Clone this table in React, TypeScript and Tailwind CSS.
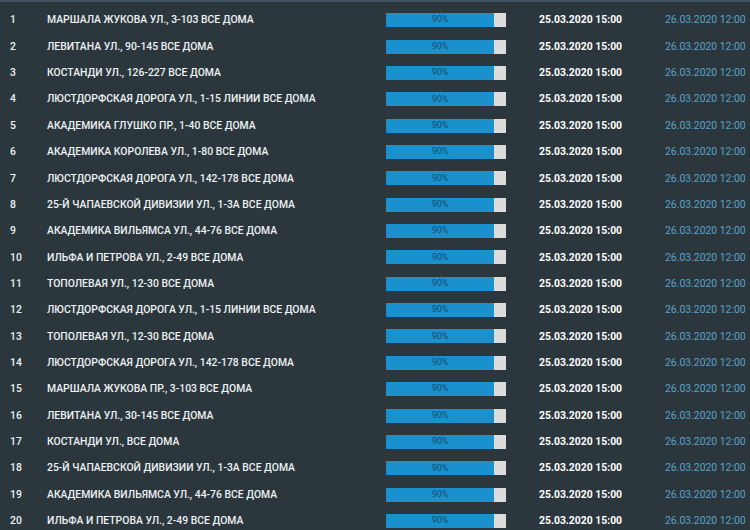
const rows = [
  "МАРШАЛА ЖУКОВА УЛ., 3-103 ВСЕ ДОМА",
  "ЛЕВИТАНА УЛ., 90-145 ВСЕ ДОМА",
  "КОСТАНДИ УЛ., 126-227 ВСЕ ДОМА",
  "ЛЮСТДОРФСКАЯ ДОРОГА УЛ., 1-15 ЛИНИИ ВСЕ ДОМА",
  "АКАДЕМИКА ГЛУШКО ПР., 1-40 ВСЕ ДОМА",
  "АКАДЕМИКА КОРОЛЕВА УЛ., 1-80 ВСЕ ДОМА",
  "ЛЮСТДОРФСКАЯ ДОРОГА УЛ., 142-178 ВСЕ ДОМА",
  "25-Й ЧАПАЕВСКОЙ ДИВИЗИИ УЛ., 1-3А ВСЕ ДОМА",
  "АКАДЕМИКА ВИЛЬЯМСА УЛ., 44-76 ВСЕ ДОМА",
  "ИЛЬФА И ПЕТРОВА УЛ., 2-49 ВСЕ ДОМА",
  "ТОПОЛЕВАЯ УЛ., 12-30 ВСЕ ДОМА",
  "ЛЮСТДОРФСКАЯ ДОРОГА УЛ., 1-15 ЛИНИИ ВСЕ ДОМА",
  "ТОПОЛЕВАЯ УЛ., 12-30 ВСЕ ДОМА",
  "ЛЮСТДОРФСКАЯ ДОРОГА УЛ., 142-178 ВСЕ ДОМА",
  "МАРШАЛА ЖУКОВА ПР., 3-103 ВСЕ ДОМА",
  "ЛЕВИТАНА УЛ., 30-145 ВСЕ ДОМА",
  "КОСТАНДИ УЛ., ВСЕ ДОМА",
  "25-Й ЧАПАЕВСКОЙ ДИВИЗИИ УЛ., 1-3А ВСЕ ДОМА",
  "АКАДЕМИКА ВИЛЬЯМСА УЛ., 44-76 ВСЕ ДОМА",
  "ИЛЬФА И ПЕТРОВА УЛ., 2-49 ВСЕ ДОМА",
];

export default function App() {
  return (
    <div className="h-[530px] w-[750px] overflow-hidden bg-[#2b373d] font-['Roboto',sans-serif]">
      <div className="h-[2px] bg-[#3f5361]" />
      <div className="pt-[5px]">
        {rows.map((address, i) => (
          <div key={i} className="flex h-[26.37px] items-center text-[10.4px]">
            <span className="w-[47px] shrink-0 pl-[10px] font-medium text-[#eef2f4]">
              {i + 1}
            </span>
            <span className="w-[339px] shrink-0 whitespace-nowrap font-medium text-[#eef2f4]">
              {address}
            </span>
            <div className="flex h-[14px] w-[120px] shrink-0 bg-[#dcdcdc]">
              <div className="flex w-[90%] items-center justify-center bg-[#1a90cc] text-[9px] text-[#184d70]">
                90%
              </div>
            </div>
            <span className="ml-[33px] w-[126px] shrink-0 whitespace-nowrap font-bold text-white">
              25.03.2020 15:00
            </span>
            <span className="whitespace-nowrap text-[#5ba2c8]">
              26.03.2020 12:00
            </span>
          </div>
        ))}
      </div>
    </div>
  );
}
